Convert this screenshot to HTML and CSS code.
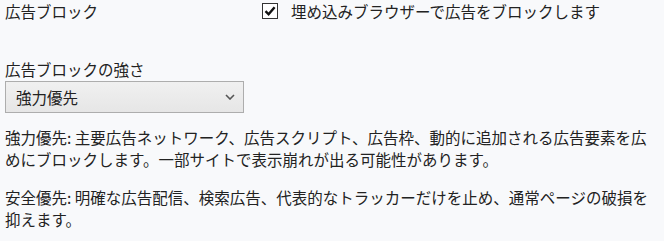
FILE: index.html
```html
<!DOCTYPE html>
<html>
    <head>
        <title>広告ブロック設定</title>
        <link rel="stylesheet" href="styles.css">
    </head>
    <body>
        <div class="row">
            <div class="label">広告ブロック</div>
            <label class="check">
                <span class="box">
                    <svg width="14" height="14" viewBox="0 0 14 14"><path d="M2.5 7.2 L5.6 10.3 L11.6 3.2" fill="none" stroke="#111" stroke-width="2.4"/></svg>
                </span>
                埋め込みブラウザーで広告をブロックします
            </label>
        </div>
        <div class="heading">広告ブロックの強さ</div>
        <div class="select">
            <span>強力優先</span>
            <svg width="10" height="6" viewBox="0 0 10 6"><path d="M1 1 L5 5 L9 1" fill="none" stroke="#555" stroke-width="1.6"/></svg>
        </div>
        <p class="desc">強力優先: 主要広告ネットワーク、広告スクリプト、広告枠、動的に追加される広告要素を広めにブロックします。一部サイトで表示崩れが出る可能性があります。</p>
        <p class="desc">安全優先: 明確な広告配信、検索広告、代表的なトラッカーだけを止め、通常ページの破損を抑えます。</p>
    </body>
</html>
```

FILE: styles.css
```css
body{
    margin: 0;
    padding: 1px 4px 0 5px;
    background-color: #f8f9fb;
    color: #222;
    font-family: "Noto Sans CJK JP", "Noto Sans", sans-serif;
    font-size: 15.5px;
}
.row{
    display: flex;
    align-items: center;
    height: 20px;
    line-height: 20px;
}
.label{
    width: 257px;
}
.check{
    display: flex;
    align-items: center;
}
.box{
    width: 14px;
    height: 14px;
    border: 1px solid #333;
    background-color: white;
    margin-right: 13px;
    display: flex;
    align-items: center;
    justify-content: center;
}
.heading{
    margin-top: 37px;
    line-height: 22px;
}
.select{
    margin-top: 1px;
    width: 219px;
    height: 30px;
    border: 1px solid #adadad;
    background: linear-gradient(#f0f0f0, #e6e6e6);
    display: flex;
    align-items: center;
    justify-content: space-between;
    padding: 0 8px 0 10px;
}
.desc{
    margin: 13px 0 0 0;
    line-height: 22px;
}
.desc + .desc{
    margin-top: 16px;
}
```
